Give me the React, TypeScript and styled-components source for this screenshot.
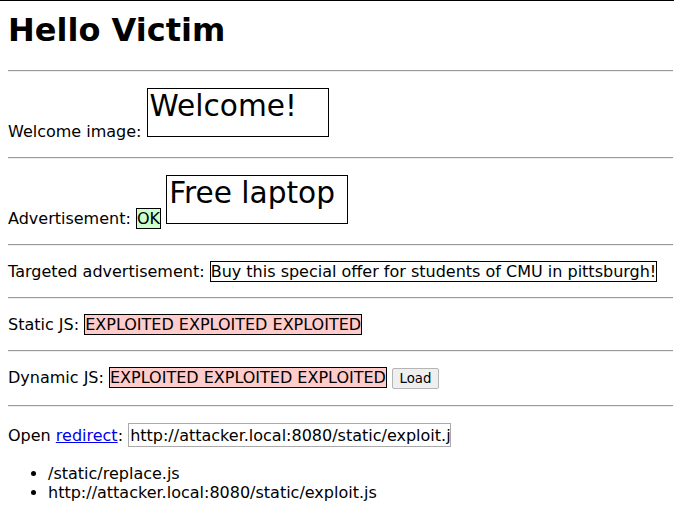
import React from "react";
import styled, { createGlobalStyle } from "styled-components";

const Global = createGlobalStyle`
  html, body { background: #fff; }
  body {
    margin: 0;
    padding: 0 1px 0 8px;
    border-top: 1px solid #000;
    font-family: "DejaVu Sans", sans-serif;
    font-size: 16px;
    color: #000;
  }
`;

const Title = styled.h1`
  font-size: 32px;
  font-weight: bold;
  margin: 10px 0 21.44px;
`;

const Rule = styled.hr`
  margin: 8px 0;
  border: 0;
  border-top: 1px solid #9a9a9a;
  border-bottom: 1px solid #eeeeee;
`;

const Row = styled.p`
  margin: 16px 0;
`;

const Picture = styled.span`
  display: inline-block;
  overflow: hidden;
  box-sizing: border-box;
  width: 182px;
  height: 49px;
  border: 1px solid #000;
  padding-left: 2px;
  font-size: 29.6px;
  line-height: normal;
  white-space: nowrap;
`;

const Tag = styled.span<{ $bg?: string }>`
  border: 1px solid #000;
  background: ${(p) => p.$bg || "transparent"};
`;

const Button = styled.button`
  font-family: "DejaVu Sans", sans-serif;
  font-size: 13.33px;
  box-sizing: border-box;
  height: 21px;
  width: 47px;
  margin: 0;
  padding: 1px 6px;
  background: #efefef;
  border: 1px solid #b5b5b5;
  border-radius: 2px;
  color: #000;
`;

const Link = styled.a`
  color: #0000ee;
  text-decoration: underline;
`;

const Field = styled.input`
  font-family: "DejaVu Sans", sans-serif;
  font-size: 16px;
  box-sizing: border-box;
  width: 323px;
  height: 24px;
  padding: 1px 0 1px 1px;
  border: 1px solid #aaaaaa;
  color: #000;
`;

const List = styled.ul`
  margin: 17px 0 16px;
  padding-left: 40px;
`;

export default function App() {
  return (
    <>
      <Global />
      <Title>Hello Victim</Title>
      <Rule />
      <Row>
        Welcome image: <Picture>Welcome!</Picture>
      </Row>
      <Rule />
      <Row>
        Advertisement: <Tag $bg="#ccffcc">OK</Tag> <Picture>Free laptop</Picture>
      </Row>
      <Rule />
      <Row>
        Targeted advertisement:{" "}
        <Tag>Buy this special offer for students of CMU in pittsburgh!</Tag>
      </Row>
      <Rule />
      <Row>
        Static JS: <Tag $bg="#ffcccc">EXPLOITED EXPLOITED EXPLOITED</Tag>
      </Row>
      <Rule />
      <Row>
        Dynamic JS: <Tag $bg="#ffcccc">EXPLOITED EXPLOITED EXPLOITED</Tag>{" "}
        <Button>Load</Button>
      </Row>
      <Rule />
      <Row>
        Open <Link href="#">redirect</Link>:{" "}
        <Field defaultValue="http://attacker.local:8080/static/exploit.js" />
      </Row>
      <List>
        <li>/static/replace.js</li>
        <li>http://attacker.local:8080/static/exploit.js</li>
      </List>
    </>
  );
}
